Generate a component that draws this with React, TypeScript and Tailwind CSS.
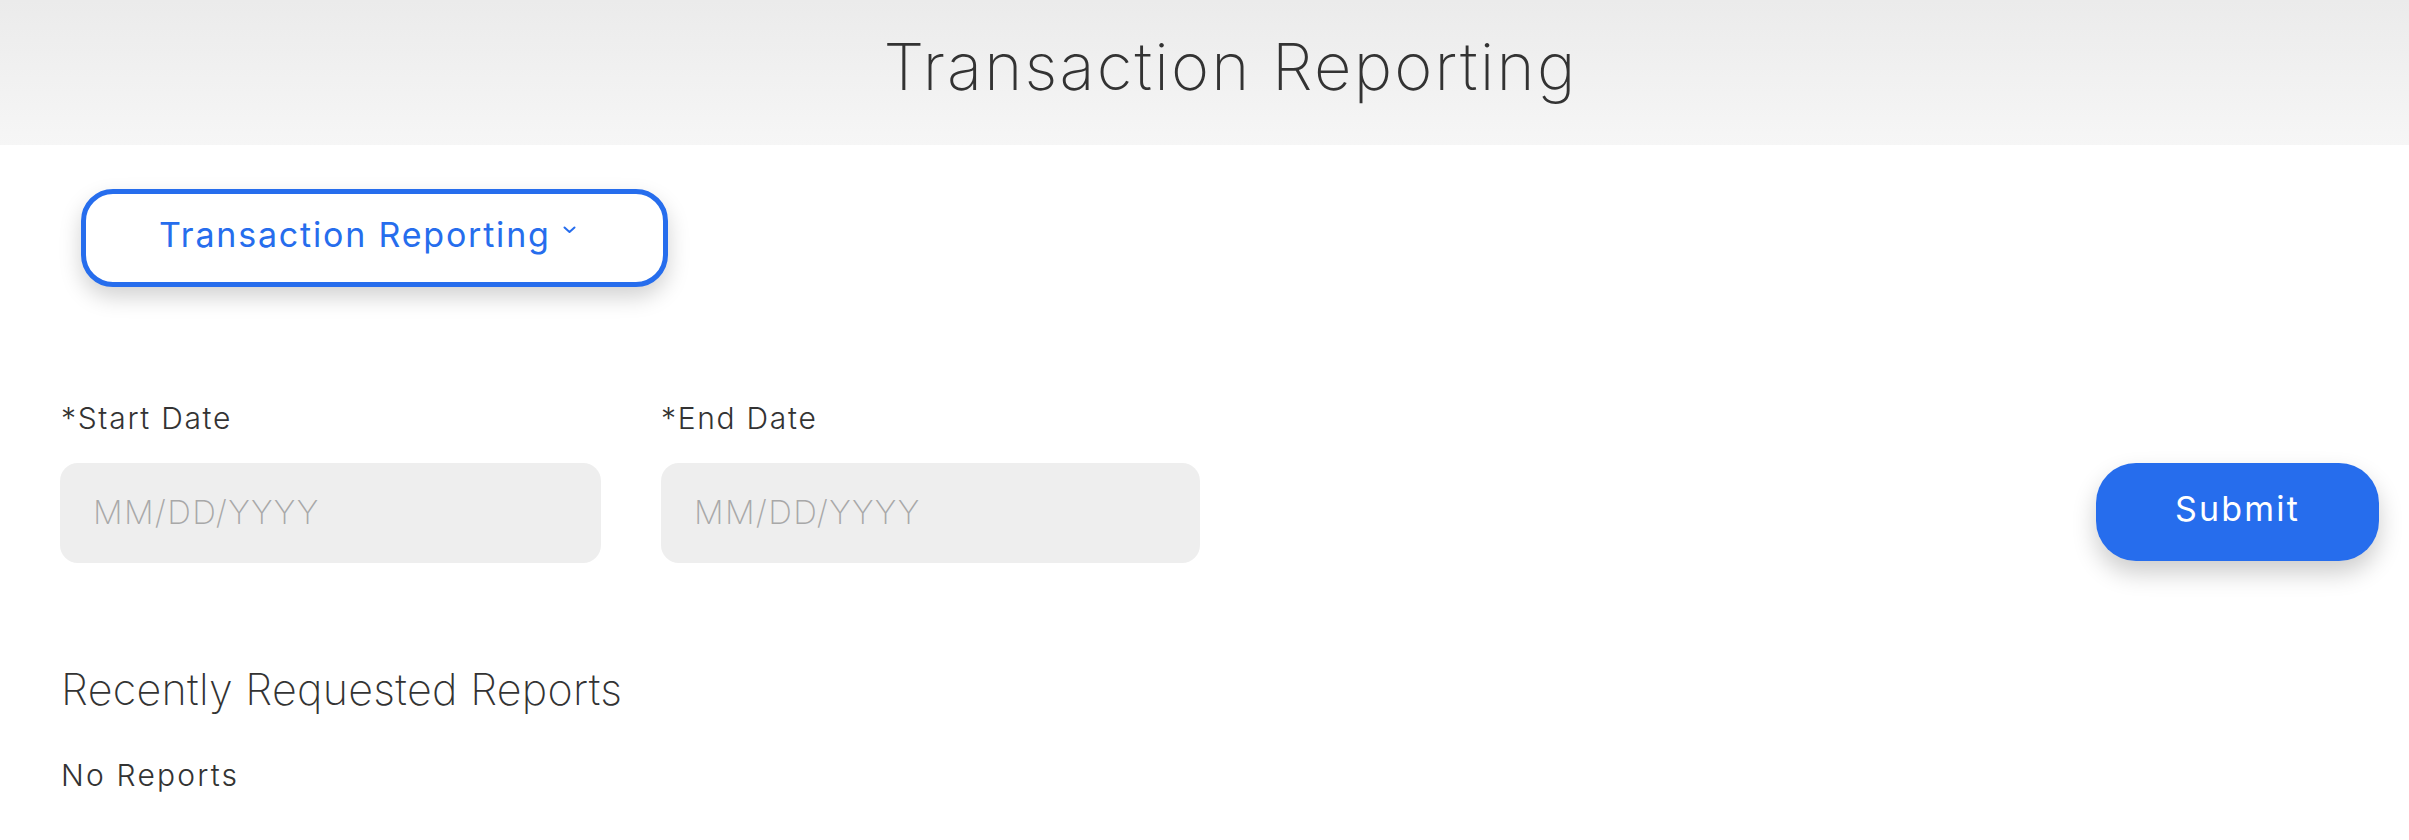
import React from "react";

export default function App() {
  const font = { fontFamily: "Inter, 'Open Sans', sans-serif" };
  return (
    <div className="w-[2409px] h-[840px] bg-white text-[#333333]" style={font}>
      <header className="h-[145px] flex items-center justify-center pl-[52px] bg-gradient-to-b from-[#ebebeb] to-[#f6f6f6]">
        <h1 className="text-[65px] font-[250] leading-none tracking-[2.2px] text-[#333333] pb-[12px]">Transaction Reporting</h1>
      </header>
      <main className="pl-[60px] pr-[30px]">
        <div className="pt-[44px] pl-[21px]">
          <button className="w-[587px] h-[98px] border-[5px] border-[#266ded] rounded-[32px] bg-white shadow-[0_10px_22px_rgba(0,0,0,0.18)] flex items-center justify-start pl-[73px] gap-[12px] text-[#266ded]">
            <span className="text-[34px] font-normal leading-none tracking-[1.8px] pb-[6px]">Transaction Reporting</span>
            <svg width="13" height="8" viewBox="0 0 13 8" className="mb-[16px]">
              <path d="M1.5 1.5 L6.5 6 L11.5 1.5" fill="none" stroke="#266ded" strokeWidth="2" strokeLinecap="round" strokeLinejoin="round" />
            </svg>
          </button>
        </div>
        <div className="mt-[113px] flex items-end justify-between">
          <div className="flex gap-[60px]">
            <div className="flex flex-col">
              <label className="text-[30px] font-light leading-[36px] tracking-[1.7px] pl-[1px]">*Start Date</label>
              <div className="mt-[27px] w-[541px] h-[100px] rounded-[18px] bg-[#eeeeee] flex items-center pl-[33px] text-[33px] font-extralight tracking-[1.3px] text-[#a8a8a8]">MM/DD/YYYY</div>
            </div>
            <div className="flex flex-col">
              <label className="text-[30px] font-light leading-[36px] tracking-[1.7px]">*End Date</label>
              <div className="mt-[27px] w-[539px] h-[100px] rounded-[18px] bg-[#eeeeee] flex items-center pl-[33px] text-[33px] font-extralight tracking-[1.3px] text-[#a8a8a8]">MM/DD/YYYY</div>
            </div>
          </div>
          <button className="w-[283px] h-[98px] mb-[2px] rounded-[40px] bg-[#266ded] text-white shadow-[0_12px_24px_rgba(0,0,0,0.2)] flex items-center justify-center">
            <span className="text-[34px] font-normal leading-none tracking-[2.2px] pb-[7px]">Submit</span>
          </button>
        </div>
        <h2 className="mt-[100px] text-[43px] font-extralight leading-[52px] tracking-[0.3px] pl-[1px]">Recently Requested Reports</h2>
        <p className="mt-[42px] text-[30px] font-light leading-[36px] tracking-[2.2px] pl-[1px]">No Reports</p>
      </main>
    </div>
  );
}
